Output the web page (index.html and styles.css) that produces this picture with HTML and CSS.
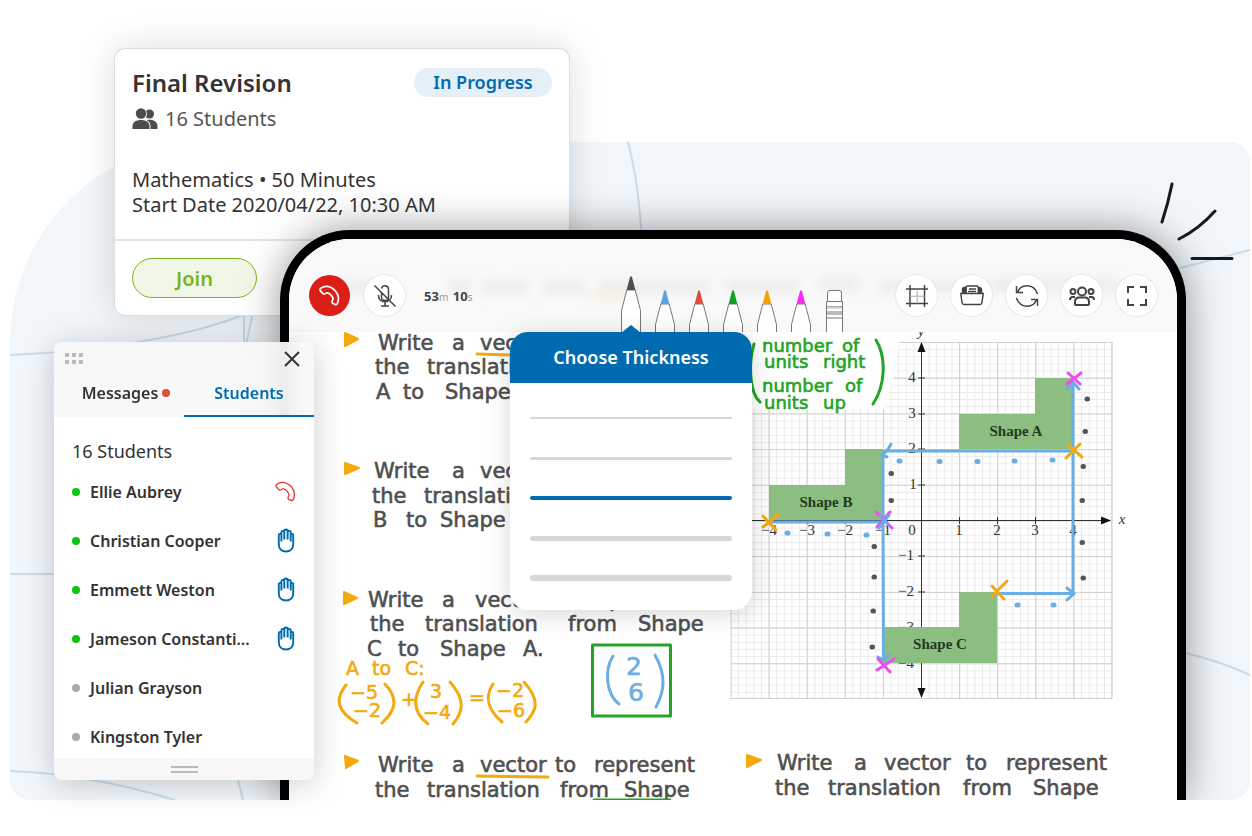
FILE: index.html
```html
<!DOCTYPE html>
<html lang="en">
<head>
<meta charset="utf-8">
<title>Online lesson</title>
<link rel="stylesheet" href="styles.css">
</head>
<body>
<svg class="sprite" aria-hidden="true">
  <symbol id="phone" viewBox="0 0 24 24"><path d="M2.2 3.6C6.5.3 13 1 17.500 5.500c4.300 4.300 5.800 10 3.600 15.300-.5 1.300-1.700 1.800-2.900 1.300l-2-.9c-1.200-.6-1.600-1.800-1.100-3l.7-1.500c.4-1 .2-2-.6-3.200-1-1.700-2.400-3-4-4-1.200-.7-2-.8-2.900-.3l-1.300.8c-1.100.6-2.300.3-3-.8L1.600 6.800c-.7-1.100-.4-2.400.6-3.200z"/></symbol>
  <symbol id="hand" viewBox="0 0 18 26"><path d="M1.500 10v7c0 4.600 3 7.500 7.500 7.500s7.500-2.900 7.500-7.500V7.600c0-2-2.600-2-2.600 0V14M1.500 10V7.600c0-2 2.700-2 2.700 0V14M4.200 12V4.500c0-2 3-2 3 0V12M7.200 11V3c0-2 3.500-2 3.500 0v9M10.700 11V4.500c0-2 3.200-2 3.200 0V14"/></symbol>
  <symbol id="pen" viewBox="0 0 20 42"><path class="pen-body" d="M.5 43V34.500L5.800 14h8.400l5.300 20.500V43"/><path class="pen-tip" d="M5.600 14 9 1.200Q10-.6 11 1.200L14.400 14z"/></symbol>
  <symbol id="pen-tall" viewBox="0 0 20 56"><path class="pen-body" d="M.5 57V34.500L5.800 14h8.400l5.300 20.500V57"/><path class="pen-tip" d="M5.600 14 9 1.200Q10-.6 11 1.200L14.400 14z"/></symbol>
</svg>

<main class="scene">
  <svg class="backdrop" viewBox="0 0 1240 658" preserveAspectRatio="none" aria-hidden="true">
    <path d="M618 0Q629 42 632 100M0 213C80 210 180 196 240 170M234 170V240M243 170Q232 220 226 260M0 432H60M0 629Q80 632 165 658M226 630L233 658M1170 126L1240 108M1175 511Q1210 519 1240 533"/>
  </svg>

  <article class="lesson">
    <div class="lesson-info">
      <header class="lesson-head">
        <h1 class="lesson-title">Final Revision</h1>
        <span class="badge">In Progress</span>
      </header>
      <p class="lesson-count">
        <svg class="people-icon" viewBox="0 0 26 22" aria-hidden="true"><circle cx="17.500" cy="6" r="4.500"/><path d="M15 12c6-1 10.500 1.500 10.500 6.500V21H15z"/><path class="cut" d="M0 22v-4c0-4.500 4-7 9-7s9.500 2.500 9.500 7v4zM9 0a6 6 0 0 1 0 12z"/><circle cx="9" cy="5.500" r="5.200"/><path d="M.5 21v-3c0-4 4-6 8.500-6s8.500 2 8.500 6v3z"/></svg>
        16 Students
      </p>
      <p class="lesson-meta">Mathematics • 50 Minutes<br>Start Date 2020/04/22, 10:30 AM</p>
    </div>
    <footer class="lesson-foot"><button class="join" type="button">Join</button></footer>
  </article>

  <div class="tablet-clip">
  <section class="tablet">
    <header class="toolbar">
      <svg class="smudge" viewBox="0 0 888 93" preserveAspectRatio="none" aria-hidden="true">
        <path d="M56 47H102M160 47H182M194 48H238M254 48H296M310 47H420M436 47H510M530 45H570M590 47H680M700 46H830"/><path class="warm" d="M300 56H350"/>
      </svg>
      <div class="group">
        <button class="round hangup" type="button" aria-label="Leave lesson"><svg class="ico20"><use href="#phone"/></svg></button>
        <button class="round" type="button" aria-label="Unmute"><svg class="ico24" viewBox="0 0 24 24"><path d="M8.500 9v4c0 4.500 7 4.500 7 0V5.500c0-4.500-6-5-7-1M5.500 11c-1 8.500 13.500 9.500 13 0M12 18v4M8 22h8M1.500 1.500l21 21"/></svg></button>
        <time class="timer"><b>53</b>m <b class="secs">10</b>s</time>
      </div>
      <div class="pens">
        <div class="pen-slot">
          <button class="tool" type="button" aria-label="Black pen"><svg class="pen-tall black"><use href="#pen-tall"/></svg></button>
          <section class="popover">
            <h2 class="popover-title">Choose Thickness</h2>
            <div class="options">
              <label class="option"><input class="bar t2" type="radio" name="w" aria-label="Thinnest"></label>
              <label class="option"><input class="bar t3" type="radio" name="w" aria-label="Thin"></label>
              <label class="option"><input class="bar t4" type="radio" name="w" aria-label="Medium" checked></label>
              <label class="option"><input class="bar t5" type="radio" name="w" aria-label="Thick"></label>
              <label class="option"><input class="bar t6" type="radio" name="w" aria-label="Thickest"></label>
            </div>
          </section>
        </div>
        <button class="tool" type="button" aria-label="Blue pen"><svg class="pen blue"><use href="#pen"/></svg></button>
        <button class="tool" type="button" aria-label="Red pen"><svg class="pen red"><use href="#pen"/></svg></button>
        <button class="tool" type="button" aria-label="Green pen"><svg class="pen green"><use href="#pen"/></svg></button>
        <button class="tool" type="button" aria-label="Orange pen"><svg class="pen orange"><use href="#pen"/></svg></button>
        <button class="tool" type="button" aria-label="Pink pen"><svg class="pen pink"><use href="#pen"/></svg></button>
        <button class="tool" type="button" aria-label="Eraser"><svg class="pen eraser" viewBox="0 0 20 42"><path d="M2.500 11V3q0-2.500 2.500-2.500h9q2.500 0 2.500 2.500v8M1.500 43V11.500h16V43M1.500 22h16M1.500 24h16M1.500 28h16"/><path class="faint" d="M2 16.500h15M2 18h15"/></svg></button>
      </div>
      <div class="group end">
        <button class="round" type="button" aria-label="Grid"><svg class="ico24" viewBox="0 0 24 24"><path d="M5 1v22M19.500 1v22M1 5h22M1 19.500h22"/><path class="faint" d="M12.200 5v14.500M5 12.200h14.500"/></svg></button>
        <button class="round" type="button" aria-label="Files"><svg class="ico24" viewBox="0 0 24 24"><path d="M.8 9.500h22.400l-1.200 9q-.3 2-2 2H4q-1.700 0-2-2z"/><path class="solid" d="M2.500 9V5.500Q2.500 3.500 4.500 3.500H6V9zM18.500 9V3.500Q21.500 3.500 21.500 6v3z"/><path d="M6 9V3L7.500 2H17l1.500 1.500V9M9 5h7M8 7.500h8"/></svg></button>
        <button class="round" type="button" aria-label="Refresh"><svg class="ico24" viewBox="0 0 24 24"><path d="M2.500 8.500C5.500-.5 19-1 22.500 10M1.500 2v6.500H8M21.500 15.500C18.500 24.500 5 25 1.500 14M22.500 22v-6.500H16"/></svg></button>
        <button class="round" type="button" aria-label="Participants"><svg class="ico26" viewBox="0 0 26 24"><path d="M6 20v-2c0-3 1.500-4.500 4-4.500h6c2.500 0 4 1.500 4 4.500v2q0 1-1 1H7q-1 0-1-1z"/><circle cx="13" cy="7.500" r="4"/><circle cx="4" cy="7.500" r="2.500"/><circle cx="22" cy="7.500" r="2.500"/><path d="M1 16q0-3 2.500-3H6M25 16q0-3-2.500-3H20"/></svg></button>
        <button class="round" type="button" aria-label="Full screen"><svg class="ico24" viewBox="0 0 24 24"><path class="bold" d="M3 9V3h6M15 3h6v6M21 15v6h-6M9 21H3v-6"/></svg></button>
      </div>
    </header>

    <svg class="board" viewBox="289 332 888 468" role="img" aria-label="Whiteboard">
      <defs>
        <pattern id="minor" x="730.500" y="342" width="7.620" height="7.140" patternUnits="userSpaceOnUse"><path d="M0 .5H7.620M.5 0V7.140" stroke="#eaeaea" fill="none"/></pattern>
        <pattern id="major" x="730.500" y="342" width="38.100" height="35.700" patternUnits="userSpaceOnUse"><path d="M0 .5H38.100M.5 0V35.700" stroke="#d0d0d0" fill="none"/></pattern>
        <marker id="tip" viewBox="0 0 10 10" refX="9" refY="5" markerWidth="10" markerHeight="10" markerUnits="userSpaceOnUse" orient="auto-start-reverse"><path d="M0 1 10 5 0 9z"/></marker>
      </defs>

      <rect x="730.500" y="342" width="382" height="357" fill="url(#minor)"/>
      <rect x="730.500" y="342" width="382" height="357" fill="url(#major)"/>
      <path d="M730.500 698.500H1112V342" stroke="#d0d0d0" fill="none"/>
      <path d="M730 332H901L895 370 885 409H752V480H730z" fill="#fff"/>

      <g class="axes">
        <path d="M921.500 343V697" marker-start="url(#tip)" marker-end="url(#tip)"/>
        <path d="M740 520.500H1110" marker-end="url(#tip)"/>
        <path d="M918 378h7M918 414h7M918 449h7M918 485h7M918 556h7M918 592h7M959.500 517v7M997.500 517v7M1035.500 517v7M845.500 517v7M807.500 517v7"/>
      </g>
      <g class="ticks">
        <text x="921" y="336" class="var">y</text><text x="1122" y="524" class="var">x</text>
        <text x="912" y="382">4</text><text x="912" y="418">3</text><text x="912" y="453">2</text><text x="913" y="489">1</text>
        <text x="906" y="560">−1</text><text x="906" y="596">−2</text><text x="906" y="632">−3</text><text x="906" y="668">−4</text>
        <text x="769" y="535">−4</text><text x="807" y="535">−3</text><text x="845" y="535">−2</text><text x="883" y="535">−1</text>
        <text x="912" y="535">0</text><text x="959" y="535">1</text><text x="997" y="535">2</text><text x="1035" y="535">3</text><text x="1073" y="535">4</text>
      </g>
      <g class="shapes">
        <path d="M959 449V414H1035V378H1073V449z"/><path d="M769 520V485H845V449H883V520z"/><path d="M883 663V627H959V592H997V663z"/>
      </g>
      <g class="shape-names"><text x="1016" y="436">Shape A</text><text x="826" y="507">Shape B</text><text x="940" y="649">Shape C</text></g>

      <g class="ink blue-ink">
        <path d="M1070 451H885M891 444Q887 452 882 455L887 457M883 452V520L883.500 658M769 522H882M1073 592V383M1067 389 1073 382 1079 389M998 593.500H1073M1067 588 1074 593.500 1067 600M878 657 884 661 889 655"/>
        <path class="dots" d="M899 461h1M939 461.500h1M977 461.500h1M1014 461h1M1052 460h1M787 533h1M827 534h1M866 535h1M1017 605h1M1053 605h1"/>
      </g>
      <path class="ink dots dark" d="M1087 399h.5M1085 431.500h.5M1083 466.500h.5M1082 500.500h.5M1082 542.500h.5M1083 578h.5M891 473.500h.5M891 500.500h.5M874 546.500h.5M874 577h.5M873 611h.5M872 647h.5"/>
      <path class="ink magenta" d="M1068 373 1080 384M1081 373 1067 384M876 512 892 528M890 512 877 527M878 659 890 672M894 659 877 670"/>
      <path class="ink blue-ink" d="M880 516 888 524M889 515 879 528"/>
      <path class="ink amber" d="M1068 445 1082 457M1080 444 1066 458M763 516 776 530M779 514 763 527M992 586 1004 599M1007 581 992 596"/>

      <g class="bullets">
        <path d="M345 333 358 339 345 346z"/><path d="M345 463 359 468 345 474z"/><path d="M344 592 357 598 344 604z"/><path d="M345 756 358 761 346 768z"/><path d="M747 755 761 760 747 767z"/>
      </g>
      <g class="hand">
        <text x="378" y="350">Write <tspan x="452">a </tspan><tspan x="480">vector</tspan></text>
        <text x="375" y="374">the <tspan x="427">translation</tspan></text>
        <text x="376" y="399">A <tspan x="403">to </tspan><tspan x="445">Shape</tspan></text>
        <text x="374" y="478">Write <tspan x="452">a </tspan><tspan x="480">vector</tspan></text>
        <text x="372" y="503">the <tspan x="424">translation</tspan></text>
        <text x="373" y="527">B <tspan x="406">to </tspan><tspan x="440">Shape</tspan></text>
        <text x="368" y="607">Write <tspan x="442">a </tspan><tspan x="475">vector </tspan><tspan x="549">to </tspan><tspan x="588">represent</tspan></text>
        <text x="370" y="631">the <tspan x="425">translation </tspan><tspan x="568">from </tspan><tspan x="638">Shape</tspan></text>
        <text x="367" y="656">C <tspan x="398">to </tspan><tspan x="440">Shape </tspan><tspan x="523">A.</tspan></text>
        <text x="378" y="772">Write <tspan x="452">a </tspan><tspan x="480">vector </tspan><tspan x="555">to </tspan><tspan x="594">represent</tspan></text>
        <text x="375" y="797">the <tspan x="427">translation </tspan><tspan x="560">from </tspan><tspan x="624">Shape</tspan></text>
        <text x="777" y="770">Write <tspan x="854">a </tspan><tspan x="884">vector </tspan><tspan x="966">to </tspan><tspan x="1006">represent</tspan></text>
        <text x="775" y="795">the <tspan x="828">translation </tspan><tspan x="963">from </tspan><tspan x="1033">Shape</tspan></text>
      </g>
      <path class="ink amber" d="M477 354 514 355M477 776 548 777"/>

      <g class="hand amber-text">
        <text x="346" y="675">A <tspan x="372">to </tspan><tspan x="405">C:</tspan></text>
        <text x="350" y="699">−5</text><text x="353" y="717">−2</text>
        <text x="401" y="706">+</text>
        <text x="430" y="698">3</text><text x="423" y="719">−4</text>
        <text x="469" y="704">=</text>
        <text x="496" y="697">−2</text><text x="497" y="717">−6</text>
      </g>
      <path class="ink amber" d="M346 685C334 700 338 712 357 723M385 684C400 700 394 712 382 723M423 682C411 700 415 714 428 724M450 682C466 700 463 712 453 724M493 684C484 698 488 710 502 722M524 682C542 702 535 712 526 722"/>

      <rect class="ink green" x="592.500" y="645" width="78" height="71"/>
      <path class="ink green" d="M594 800H670"/>
      <path class="ink blue-ink" d="M613 656C604 670 606 694 619 704M655 655C667 676 664 692 656 707"/>
      <g class="hand blue-text"><text x="626" y="675">2</text><text x="628" y="701">6</text></g>

      <g class="hand green-text">
        <text x="762" y="352">number <tspan x="842">of</tspan></text><text x="764" y="368">units <tspan x="823">right</tspan></text><text x="762" y="392">number <tspan x="845">of</tspan></text><text x="764" y="409">units <tspan x="823">up</tspan></text>
      </g>
      <path class="ink green" d="M754 344C748 365 750 394 760 402M876 340C887 358 885 386 873 404"/>
    </svg>
  </section>
  </div>

  <svg class="spark" viewBox="0 0 74 80" aria-hidden="true"><path d="M12 2Q8 22 2 40M55 29Q39 47 19 57M32 76.500H72"/></svg>

  <aside class="students">
    <header class="students-head">
      <div class="students-bar">
        <svg class="grip" viewBox="0 0 18 12" aria-hidden="true"><path d="M0 0h4v4H0zM7 0h4v4H7zM14 0h4v4h-4zM0 7h4v4H0zM7 7h4v4H7zM14 7h4v4h-4z"/></svg>
        <button class="close" type="button" aria-label="Close"><svg class="x-icon" viewBox="0 0 16 16"><path d="M1 1l14 14M15 1L1 15"/></svg></button>
      </div>
      <nav class="tabs">
        <button class="tab messages" type="button">Messages<span class="alert"></span></button>
        <button class="tab active" type="button">Students</button>
      </nav>
    </header>
    <div class="students-body">
      <h2 class="students-count">16 Students</h2>
      <ul class="list">
        <li class="row"><span class="dot on"></span><span class="name">Ellie Aubrey</span><svg class="row-phone"><use href="#phone"/></svg></li>
        <li class="row"><span class="dot on"></span><span class="name">Christian Cooper</span><svg class="row-hand"><use href="#hand"/></svg></li>
        <li class="row"><span class="dot on"></span><span class="name">Emmett Weston</span><svg class="row-hand"><use href="#hand"/></svg></li>
        <li class="row"><span class="dot on"></span><span class="name">Jameson Constanti...</span><svg class="row-hand"><use href="#hand"/></svg></li>
        <li class="row"><span class="dot"></span><span class="name">Julian Grayson</span></li>
        <li class="row"><span class="dot"></span><span class="name">Kingston Tyler</span></li>
      </ul>
    </div>
    <footer class="students-foot"><span class="handle"></span></footer>
  </aside>
</main>
</body>
</html>
```
FILE: styles.css
```css
* { box-sizing: border-box; }
body { margin: 0; background: #fff; color: #333; font-family: "Noto Sans", sans-serif; }
h1, h2, p, ul { margin: 0; padding: 0; }
button { font: inherit; color: inherit; background: none; border: 0; padding: 0; cursor: pointer; }
.sprite { position: absolute; width: 0; height: 0; }

.scene { position: relative; padding: 230px 66px 36px 280px; overflow: hidden; }
.backdrop { position: absolute; left: 10px; top: 142px; width: calc(100% - 12px); height: calc(100% - 178px); background: #f1f6fa; border-radius: 200px 20px 20px 20px; fill: none; stroke: #cbdbe7; stroke-width: 2; }

.lesson { position: absolute; left: 115px; top: 49px; width: 454px; background: #fff; border-radius: 10px; box-shadow: 0 0 0 1px #ddd, 0 0 36px rgba(0, 0, 0, .15); }
.lesson-info { padding: 15px 17px 22px; border-bottom: 2px solid #e4e4e4; }
.lesson-head { display: flex; justify-content: space-between; align-items: center; height: 37px; }
.lesson-title { font-size: 24px; line-height: 36px; font-weight: 600; }
.badge { width: 138px; border-radius: 15px; background: #e4eff8; color: #006bb0; font-size: 18px; line-height: 29px; font-weight: 600; text-align: center; }
.lesson-count { display: flex; align-items: center; gap: 7px; margin-top: 4px; color: #555; font-size: 20px; line-height: 28px; }
.people-icon { width: 26px; height: 22px; fill: #4d4d4d; }
.people-icon .cut { fill: #fff; }
.lesson-meta { margin-top: 34px; font-size: 20px; line-height: 25px; }
.lesson-foot { padding: 17px; }
.join { display: block; width: 125px; height: 40px; border: 1px solid #79b51c; border-radius: 20px; background: #f1f7e7; color: #79b51c; font-size: 20px; font-weight: 600; }

.tablet-clip { position: relative; clip-path: inset(-60px -60px 0 -60px); }
.tablet { border: 9px solid #000; border-bottom: 0; border-radius: 70px 70px 0 0; background: #fff; box-shadow: 0 0 40px rgba(0, 0, 0, .4); }
.toolbar { position: relative; z-index: 1; display: grid; grid-template-columns: 1fr auto 1fr; align-items: end; height: 93px; padding: 0 20px; background: #f9f9f9; border-radius: 61px 61px 0 0; }
.smudge { position: absolute; inset: 0; width: 100%; height: 100%; fill: none; stroke: #ededed; stroke-width: 14; filter: blur(5px); }
.smudge .warm { stroke: #f7efdf; stroke-width: 8; }
.group { position: relative; display: flex; align-items: center; gap: 14px; padding-bottom: 16px; }
.end { justify-content: flex-end; }
.round { display: grid; place-items: center; width: 41px; height: 41px; border-radius: 50%; background: #fff; box-shadow: 0 0 0 1px #e8e8e8; fill: none; stroke: #444; stroke-width: 1.5; }
.hangup { background: #dc1e18; box-shadow: none; stroke: #fff; stroke-width: 2; }
.ico20 { width: 21px; height: 21px; }
.ico24 { width: 24px; height: 24px; }
.ico26 { width: 26px; height: 24px; stroke-width: 2; }
.bold { stroke-width: 2; }
.solid { fill: #444; }
.faint { stroke: #aaa; stroke-width: 1; }
.timer { margin-left: 5px; color: #999; font-size: 10px; }
.timer b { color: #444; font-size: 13px; }
.secs { margin-left: 2px; }

.pens { position: relative; display: flex; align-items: flex-end; gap: 14px; }
.pen-slot { position: relative; }
.tool { display: block; }
.pen, .pen-tall { display: block; width: 20px; height: 42px; overflow: hidden; fill: #333; }
.pen-tall { height: 56px; }
.pen-body { fill: #fff; stroke: #777; stroke-width: 1; }
.black { fill: #4d4d4d; }
.blue { fill: #55a4e3; }
.red { fill: #e14b41; }
.green.pen { fill: #129d23; }
.orange { fill: #f5a303; }
.pink { fill: #f928f2; }
.pen.eraser { fill: #fff; stroke: #777; }

.popover { position: absolute; top: 100%; left: 50%; width: 242px; margin: 0 0 0 -121px; background: #fff; border-radius: 18px; box-shadow: 0 4px 24px rgba(0, 0, 0, .16); }
.popover::before { content: ""; position: absolute; top: -7px; left: 111px; border: 10px solid transparent; border-top: 0; border-bottom: 8px solid #006bb0; }
.popover-title { border-radius: 18px 18px 0 0; background: #006bb0; color: #fff; font-size: 18px; line-height: 51px; font-weight: 600; text-align: center; }
.options { padding: 15px 20px 12px; }
.option { display: flex; align-items: center; height: 40px; }
.bar { appearance: none; width: 100%; margin: 0; border-radius: 3px; background: #d7d7d7; }
.bar:checked { background: #006bb0; }
.t2 { height: 2px; }
.t3 { height: 3px; }
.t4 { height: 4px; }
.t5 { height: 5px; }
.t6 { height: 6px; }

.board { display: block; width: 100%; height: auto; }
.axes { stroke: #333; stroke-width: 1; fill: none; }
.axes path { fill: none; }
#tip path { fill: #111; stroke: none; }
.ticks { font: 15px "Liberation Serif", serif; fill: #333; text-anchor: middle; }
.var { font-style: italic; }
.shapes { fill: #8cbe82; }
.shape-names { font: bold 15px "Liberation Serif", serif; fill: #1f3a1c; text-anchor: middle; }
.ink { fill: none; stroke-width: 3; stroke-linecap: round; stroke-linejoin: round; }
.blue-ink { stroke: #6aaee3; }
.dots { stroke-width: 5; }
.dark { stroke: #555; }
.magenta { stroke: #ee4dee; }
.amber { stroke: #f4a90c; }
.green.ink { stroke: #24a324; }
.bullets { fill: #f4a90c; stroke: #f4a90c; stroke-width: 2; stroke-linejoin: round; }
.hand { font: 21px "DejaVu Sans", sans-serif; fill: #4f4f4f; stroke: #4f4f4f; stroke-width: .6; }
.amber-text { font-size: 19px; fill: #f4a90c; stroke: #f4a90c; }
.blue-text { font-size: 25px; fill: #6aaee3; stroke: #6aaee3; }
.green-text { font-size: 18px; fill: #24a324; stroke: #24a324; }

.spark { position: absolute; right: 18px; top: 182px; width: 74px; height: 80px; fill: none; stroke: #15181c; stroke-width: 3; stroke-linecap: round; }

.students { position: absolute; left: 54px; top: 342px; width: 260px; border-radius: 8px; box-shadow: 0 4px 32px rgba(0, 0, 0, .2); }
.students-head { background: rgba(247, 247, 247, .92); backdrop-filter: blur(8px); border-radius: 8px 8px 0 0; }
.students-bar { display: flex; justify-content: space-between; align-items: center; height: 34px; padding: 0 14px 0 11px; }
.grip { width: 18px; height: 12px; fill: #bbb; }
.close { display: block; }
.x-icon { display: block; width: 16px; height: 16px; fill: none; stroke: #333; stroke-width: 2; }
.tabs { display: grid; grid-template-columns: 1fr 1fr; }
.tab { display: flex; align-items: center; justify-content: center; gap: 4px; height: 41px; padding-bottom: 5px; font-size: 16px; font-weight: 600; border-bottom: 2px solid transparent; }
.messages { padding-left: 14px; }
.active { color: #006bb0; border-color: #006bb0; }
.alert { width: 8px; height: 8px; border-radius: 50%; background: #e14b41; }
.students-body { height: 341px; padding: 19px 18px 0; background: #fff; }
.students-count { font-size: 18px; line-height: 31px; font-weight: 400; }
.list { list-style: none; }
.row { display: flex; align-items: center; height: 49px; }
.dot { width: 8px; height: 8px; margin: 0 10px 0 0; border-radius: 50%; background: #a9a9a9; }
.on { background: #0fc30f; }
.name { flex: 1; font-size: 16px; font-weight: 600; }
.row-phone { width: 21px; height: 21px; fill: none; stroke: #e0352c; stroke-width: 1.5; }
.row-hand { width: 18px; height: 25px; margin-right: 1px; fill: none; stroke: #006bb0; stroke-width: 2; }
.students-foot { display: grid; place-items: center; height: 22px; background: #f7f7f7; border-radius: 0 0 8px 8px; }
.handle { width: 27px; height: 7px; border: solid #bbb; border-width: 2px 0; }
```
